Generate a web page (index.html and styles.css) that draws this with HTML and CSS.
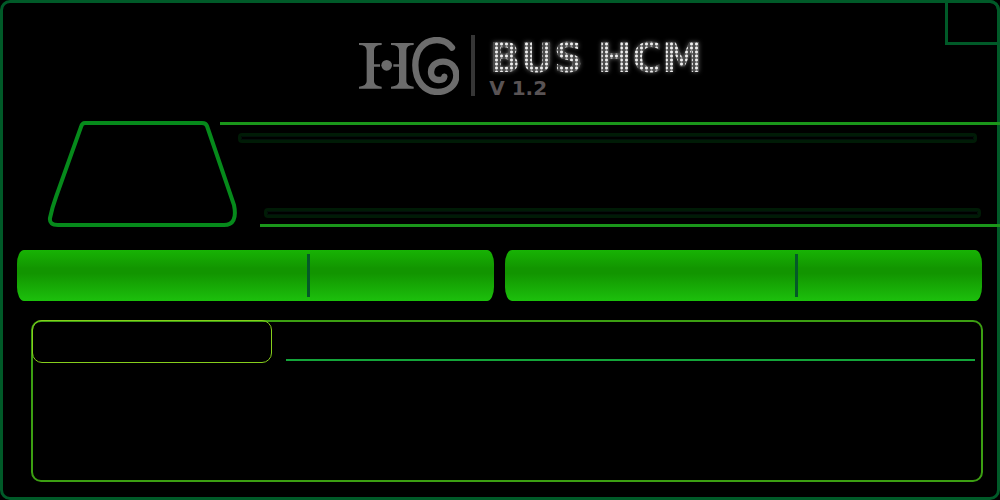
FILE: index.html
```html
<!DOCTYPE html>
<html lang="en">
<head>
<meta charset="utf-8">
<meta name="viewport" content="width=device-width, initial-scale=1">
<title>BUS HCM</title>
<link rel="stylesheet" href="styles.css">
</head>
<body>
<main class="screen">
  <div class="corner"></div>
  <header class="brand">
    <svg class="logo" viewBox="27 36 300 174" role="img" aria-label="HG logo">
      <g fill="currentColor">
        <path d="M27 54H95V60Q72 60 72 76V169Q72 184 95 185V191H27V185Q50 184 50 169V76Q50 60 27 60Z"/>
        <path d="M123 54H191V60Q169 60 169 76V169Q169 184 191 185V191H123V185Q147 184 147 169V76Q147 60 123 60Z"/>
        <path d="M72 118H90V125H72ZM130 118H147V125H130Z"/>
        <circle cx="110" cy="121" r="16"/>
      </g>
      <path d="M306 68C294 51 280 45 261 45C220 45 196 77 196 121C196 169 224 201 263 201C297 201 319 178 319 151C319 127 303 110 279 110C257 110 243 124 243 141C243 156 253 165 267 165C276 165 282 161 283 155" fill="none" stroke="currentColor" stroke-width="19" stroke-linecap="round"/>
    </svg>
    <div class="rule"></div>
    <div class="words">
      <h1 class="title">BUS HCM</h1>
      <p class="version">V 1.2</p>
    </div>
  </header>

  <section class="route">
    <svg class="badge" viewBox="0 0 190 106" aria-hidden="true">
      <path d="M38 2H155Q159 2 160 5L187 84Q191 104 177 104H11Q2 104 3 97Q5 87 9 76L34 6Q35 2 38 2Z" fill="none" stroke="#068a1b" stroke-width="4"/>
    </svg>
    <div class="lanes">
      <div class="line"></div>
      <div class="slot"></div>
      <div class="slot slot-low"></div>
      <div class="line line-low"></div>
    </div>
  </section>

  <section class="bars">
    <div class="bar"><div class="split"></div></div>
    <div class="bar"><div class="split"></div></div>
  </section>

  <section class="panel">
    <div class="tab"></div>
    <div class="underline"></div>
  </section>
</main>
</body>
</html>
```
FILE: styles.css
```css
* { box-sizing: border-box; }

body {
  margin: 0;
  background: #000;
  font-family: "DejaVu Sans", sans-serif;
}

.screen {
  position: relative;
  display: flex;
  flex-direction: column;
  min-height: 100vh;
  padding: 32px 0 15px;
  border: 3px solid #005a28;
  border-radius: 10px;
}

.corner {
  position: absolute;
  top: -3px;
  right: -3px;
  width: 55px;
  height: 45px;
  border: 3px solid #005a28;
  border-top-right-radius: 10px;
}

.brand {
  display: flex;
  align-items: center;
  justify-content: center;
  gap: 12px;
  height: 61px;
  padding-left: 62px;
}

.logo {
  width: 100px;
  height: 58px;
  color: #6c6c6c;
}

.rule {
  width: 4px;
  height: 61px;
  background: #363636;
}

.words { padding: 4px 0 0 2px; }

.title {
  margin: 0;
  font-size: 41px;
  line-height: 40px;
  font-weight: bold;
  color: transparent;
  background-color: #4a4a4a;
  background-image: radial-gradient(circle, #eee 1px, transparent 2px);
  background-size: 5px 4px;
  background-clip: text;
  -webkit-background-clip: text;
  filter: drop-shadow(0 0 2px #555);
}

.version {
  margin: 0;
  font-size: 20px;
  line-height: 20px;
  font-weight: bold;
  color: #595354;
}

.route {
  display: flex;
  margin: 25px -3px 0 44px;
}

.badge {
  flex: none;
  width: 190px;
  height: 106px;
}

.lanes {
  display: flex;
  flex: 1;
  flex-direction: column;
  margin-left: -17px;
  padding: 1px 0 0;
}

.line {
  height: 3px;
  background: #1a961a;
}

.line-low { margin: 6px 0 0 40px; }

.slot {
  height: 10px;
  margin: 8px 23px 0 18px;
  border: 3px solid #001b06;
  border-radius: 4px;
  background: #000;
  box-shadow: inset 0 0 0 1px #02100a;
}

.slot-low { margin: 65px 19px 0 44px; }

.bars {
  display: grid;
  grid-template-columns: 1fr 1fr;
  gap: 11px;
  margin: 23px 15px 0 14px;
}

.bar {
  display: grid;
  grid-template-columns: 290fr 3px 184fr;
  height: 51px;
  padding: 4px 0;
  border-radius: 7px / 14px;
  background: linear-gradient(#17b304, #129500 36%, #129500 46%, #1cc00c);
}

.split {
  grid-column: 2;
  background: #045a28;
}

.panel {
  display: flex;
  flex: 1;
  align-items: flex-start;
  gap: 14px;
  min-height: 162px;
  margin: 19px 14px 0 28px;
  padding-right: 6px;
  border: 2px solid #3c9f12;
  border-radius: 10px;
}

.tab {
  width: 240px;
  height: 43px;
  margin: -2px 0 0 -1px;
  border: 1px solid #86ce1c;
  border-radius: 10px;
}

.underline {
  flex: 1;
  height: 2px;
  margin-top: 37px;
  background: #14a53a;
}
```
